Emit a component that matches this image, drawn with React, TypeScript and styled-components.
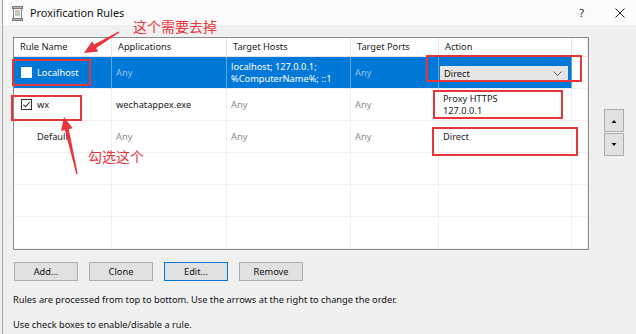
import styled, { createGlobalStyle } from 'styled-components'

const GlobalStyle = createGlobalStyle`
  html, body {
    margin: 0;
    padding: 0;
    background: #f0f0f0;
  }
  * {
    box-sizing: border-box;
  }
`

const RED = '#e8343b'
const UI_FONT = `'Noto Sans', 'Liberation Sans', sans-serif`
const FS = '9.25px'

type Rule = {
  name: string
  checkbox: 'on' | 'off' | 'none'
  apps: string
  hosts: string[]
  ports: string
  action: string[]
  selected?: boolean
}

const rules: Rule[] = [
  {
    name: 'Localhost',
    checkbox: 'off',
    apps: 'Any',
    hosts: ['localhost; 127.0.0.1;', '%ComputerName%; ::1'],
    ports: 'Any',
    action: ['Direct'],
    selected: true,
  },
  {
    name: 'wx',
    checkbox: 'on',
    apps: 'wechatappex.exe',
    hosts: ['Any'],
    ports: 'Any',
    action: ['Proxy HTTPS', '127.0.0.1'],
  },
  {
    name: 'Default',
    checkbox: 'none',
    apps: 'Any',
    hosts: ['Any'],
    ports: 'Any',
    action: ['Direct'],
  },
]

const columns = ['Rule Name', 'Applications', 'Target Hosts', 'Target Ports', 'Action', '']

// tapered arrow polygon from tail to tip
const arrowPoints = (x1: number, y1: number, x2: number, y2: number) => {
  const dx = x2 - x1
  const dy = y2 - y1
  const len = Math.hypot(dx, dy)
  const ux = dx / len
  const uy = dy / len
  const px = -uy
  const py = ux
  const head = 13
  const hw = 6
  const s0 = 0.7
  const s1 = 2
  const bx = x2 - ux * head
  const by = y2 - uy * head
  const pts = [
    [x1 + px * s0, y1 + py * s0],
    [bx + px * s1, by + py * s1],
    [bx + px * hw, by + py * hw],
    [x2, y2],
    [bx - px * hw, by - py * hw],
    [bx - px * s1, by - py * s1],
    [x1 - px * s0, y1 - py * s0],
  ]
  return pts.map((p) => p.map((v) => v.toFixed(1)).join(',')).join(' ')
}

const marks = [
  { x: 13, y: 60, w: 77, h: 25 },
  { x: 12, y: 96, w: 69, h: 24 },
  { x: 427, y: 56, w: 154, h: 25 },
  { x: 434, y: 91, w: 128, h: 27 },
  { x: 433, y: 128, w: 144, h: 27 },
]

const Checkbox = ({ checked, light }: { checked: boolean; light?: boolean }) => (
  <CheckBoxBox $light={light}>
    {checked && (
      <svg width="9" height="9" viewBox="0 0 10 10">
        <path d="M1.5 5.2 L4 7.6 L8.7 2.2" fill="none" stroke="#333" strokeWidth="1.2" />
      </svg>
    )}
  </CheckBoxBox>
)

const App = () => {
  return (
    <Frame>
      <GlobalStyle />
      <Window>
        <TitleBar>
          <TitleIcon width="11" height="15" viewBox="0 0 11 15">
            <rect x="1.5" y="1.5" width="8" height="12" fill="#f4f4f4" stroke="#8a8a8a" />
            <rect x="0.5" y="0.5" width="10" height="2" fill="#b8b8b8" stroke="#7a7a7a" />
            <rect x="0.5" y="12.5" width="10" height="2" fill="#b8b8b8" stroke="#7a7a7a" />
            <line x1="3" y1="5" x2="8" y2="5" stroke="#d97a7a" />
            <line x1="3" y1="7" x2="8" y2="7" stroke="#8fb08f" />
            <line x1="3" y1="9" x2="8" y2="9" stroke="#9a9a9a" />
          </TitleIcon>
          <TitleText>Proxification Rules</TitleText>
          <TitleSpacer />
          <HelpMark>?</HelpMark>
          <CloseMark width="10" height="10" viewBox="0 0 10 10">
            <path d="M0.5 0.5 L9.5 9.5 M9.5 0.5 L0.5 9.5" stroke="#222" strokeWidth="1" />
          </CloseMark>
        </TitleBar>

        <Body>
          <TableArea>
            <Table>
              {columns.map((c, i) => (
                <HeaderCell key={i}>{c}</HeaderCell>
              ))}
              {rules.map((r) => (
                <RowCells key={r.name} rule={r} />
              ))}
              {[0, 1, 2].map((i) =>
                columns.map((_, j) => <Cell key={`e${i}-${j}`} />)
              )}
            </Table>
            <SideButtons>
              <ArrowButton type="button">
                <svg width="6" height="4" viewBox="0 0 6 4">
                  <path d="M0.5 4 L3 1 L5.5 4 Z" fill="#111" />
                </svg>
              </ArrowButton>
              <ArrowButton type="button">
                <svg width="6" height="4" viewBox="0 0 6 4">
                  <path d="M0.5 0 L3 3 L5.5 0 Z" fill="#111" />
                </svg>
              </ArrowButton>
            </SideButtons>
          </TableArea>

          <ButtonRow>
            <PushButton type="button">Add...</PushButton>
            <PushButton type="button">Clone</PushButton>
            <PushButton type="button" $default>
              Edit...
            </PushButton>
            <PushButton type="button">Remove</PushButton>
          </ButtonRow>

          <HintText>
            Rules are processed from top to bottom. Use the arrows at the right to change the order.
          </HintText>
          <HintText $second>Use check boxes to enable/disable a rule.</HintText>
        </Body>
      </Window>

      <Overlay width="636" height="334" viewBox="0 0 636 334">
        {marks.map((m, i) => (
          <rect
            key={i}
            x={m.x}
            y={m.y}
            width={m.w}
            height={m.h}
            fill="none"
            stroke={RED}
            strokeWidth="2"
          />
        ))}
        <polygon points={arrowPoints(119, 32, 84, 53)} fill={RED} />
        <polygon points={arrowPoints(77, 174, 64, 117)} fill={RED} />
      </Overlay>
      <NoteLabel style={{ left: 133, top: 18 }}>这个需要去掉</NoteLabel>
      <NoteLabel style={{ left: 88, top: 148 }}>勾选这个</NoteLabel>
    </Frame>
  )
}

const RowCells = ({ rule }: { rule: Rule }) => {
  const sel = !!rule.selected
  return (
    <>
      <Cell $selected={sel}>
        <NameWrap>
          {rule.checkbox === 'none' ? (
            <CheckSpacer />
          ) : (
            <Checkbox checked={rule.checkbox === 'on'} light={sel} />
          )}
          <CellText $selected={sel}>{rule.name}</CellText>
        </NameWrap>
      </Cell>
      <Cell $selected={sel}>
        <CellText $selected={sel} $muted={rule.apps === 'Any'}>
          {rule.apps}
        </CellText>
      </Cell>
      <Cell $selected={sel}>
        <CellText $selected={sel} $muted={rule.hosts[0] === 'Any'}>
          {rule.hosts.map((h) => (
            <Line key={h}>{h}</Line>
          ))}
        </CellText>
      </Cell>
      <Cell $selected={sel}>
        <CellText $selected={sel} $muted>
          {rule.ports}
        </CellText>
      </Cell>
      <Cell $selected={sel} $flush={sel}>
        {sel ? (
          <Combo>
            <span>{rule.action[0]}</span>
            <svg width="9" height="5" viewBox="0 0 9 5">
              <path d="M0.5 0.5 L4.5 4.5 L8.5 0.5" fill="none" stroke="#555" strokeWidth="1" />
            </svg>
          </Combo>
        ) : (
          <CellText>
            {rule.action.map((a) => (
              <Line key={a}>{a}</Line>
            ))}
          </CellText>
        )}
      </Cell>
      <Cell />
    </>
  )
}

const Frame = styled.div`
  position: relative;
  width: 636px;
  height: 334px;
  overflow: hidden;
  padding-left: 2px;
  background: #f0f0f0;
  font-family: ${UI_FONT};
  color: #1a1a1a;
`

const Window = styled.div`
  height: 100%;
  border-left: 1px solid #a6a6a6;
  display: flex;
  flex-direction: column;
`

const TitleBar = styled.div`
  height: 25px;
  background: #fbfbfb;
  display: flex;
  align-items: center;
  padding-left: 9px;
  padding-right: 11px;
`

const TitleIcon = styled.svg`
  margin-right: 7px;
  margin-top: 1px;
`

const TitleText = styled.span`
  font-size: 10.9px;
  color: #111;
`

const TitleSpacer = styled.div`
  flex: 1;
`

const HelpMark = styled.span`
  font-size: 11px;
  color: #222;
  margin-right: 31px;
`

const CloseMark = styled.svg`
  display: block;
`

const Body = styled.div`
  padding: 12px 0 0 10px;
  display: flex;
  flex-direction: column;
`

const TableArea = styled.div`
  display: flex;
  align-items: flex-start;
`

const Table = styled.div`
  width: 576px;
  border: 1px solid #8c8c8c;
  background: #fff;
  display: grid;
  grid-template-columns: 98px 115px 124px 88px 133px 16px;
  grid-template-rows: 19px repeat(6, 32px);
`

const HeaderCell = styled.div`
  font-size: ${FS};
  line-height: 18px;
  padding-left: 6px;
  color: #1a1a1a;
  border-right: 1px solid #e5e5e5;
  border-bottom: 1px solid #e5e5e5;
  white-space: nowrap;
  overflow: hidden;
`

const Cell = styled.div<{ $selected?: boolean; $flush?: boolean }>`
  display: flex;
  align-items: center;
  padding: ${(p) => (p.$flush ? '0 3px 0 1px' : '0 4px')};
  background: ${(p) => (p.$selected ? '#0078d7' : '#fff')};
  border-right: 1px solid ${(p) => (p.$selected ? '#5ea5e4' : '#f0f0f0')};
  border-bottom: 1px solid #f0f0f0;
  overflow: hidden;
`

const NameWrap = styled.div`
  display: flex;
  align-items: center;
  padding-left: 3px;
`

const CheckBoxBox = styled.div<{ $light?: boolean }>`
  width: 11px;
  height: 11px;
  margin-right: 5px;
  border: 1px solid ${(p) => (p.$light ? '#ffffff' : '#333')};
  background: #fff;
  display: flex;
  align-items: center;
  justify-content: center;
`

const CheckSpacer = styled.div`
  width: 16px;
`

const CellText = styled.div<{ $selected?: boolean; $muted?: boolean }>`
  font-size: ${FS};
  line-height: 11.5px;
  white-space: nowrap;
  color: ${(p) =>
    p.$selected ? (p.$muted ? '#9cc3ea' : '#ffffff') : p.$muted ? '#8a8a8a' : '#1a1a1a'};
`

const Line = styled.div``

const Combo = styled.div`
  width: 100%;
  height: 16px;
  margin-top: 2px;
  background: #e5e5e5;
  display: flex;
  align-items: center;
  justify-content: space-between;
  padding: 0 6px 0 4px;
  font-size: ${FS};
  color: #111;
`

const SideButtons = styled.div`
  display: flex;
  flex-direction: column;
  gap: 1px;
  margin-left: 15px;
  padding-top: 72px;
`

const ArrowButton = styled.button`
  width: 20px;
  height: 23px;
  padding: 0;
  background: #e1e1e1;
  border: 1px solid #adadad;
  display: flex;
  align-items: center;
  justify-content: center;
`

const ButtonRow = styled.div`
  display: flex;
  gap: 11px;
  margin: 12px 0 0 1px;
`

const PushButton = styled.button<{ $default?: boolean }>`
  width: 64px;
  height: 19px;
  padding: 0;
  background: #e1e1e1;
  border: 1px solid ${(p) => (p.$default ? '#0078d7' : '#adadad')};
  font-family: ${UI_FONT};
  font-size: ${FS};
  color: #111;
`

const HintText = styled.div<{ $second?: boolean }>`
  font-size: ${FS};
  line-height: 16px;
  margin-top: ${(p) => (p.$second ? '9px' : '11px')};
  color: #111;
  white-space: nowrap;
`

const Overlay = styled.svg`
  position: absolute;
  left: 0;
  top: 0;
  pointer-events: none;
`

const NoteLabel = styled.span`
  position: absolute;
  font-family: 'Noto Sans CJK SC', sans-serif;
  font-size: 14px;
  line-height: 16px;
  color: ${RED};
  white-space: nowrap;
`

export default App
